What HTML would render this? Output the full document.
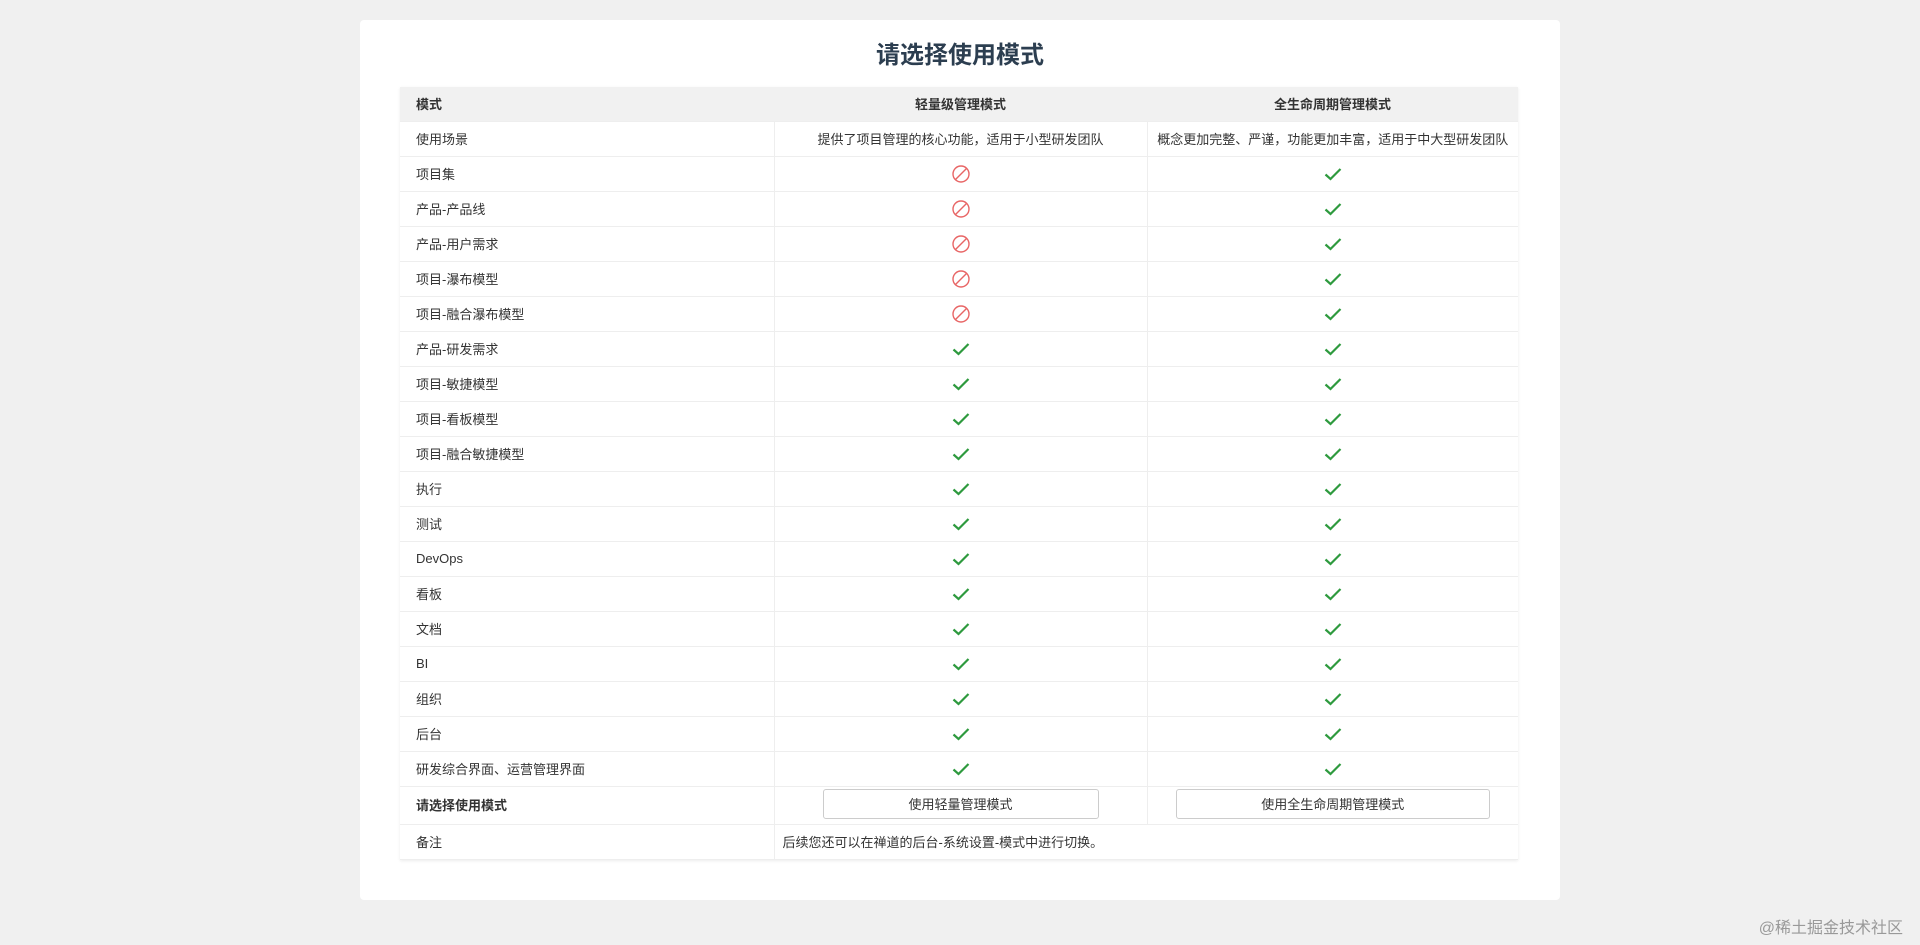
<!DOCTYPE html>
<html><head><meta charset="utf-8"><style>
body{margin:0;width:1920px;height:945px;background:#f0f0f0;font-family:"Liberation Sans","Noto Sans CJK SC",sans-serif;color:#333;position:relative;overflow:hidden}
.card{position:absolute;left:360px;top:20px;width:1200px;height:880px;background:#fff;border-radius:4px}
h1{position:absolute;left:0;right:0;top:19px;margin:0;text-align:center;font-size:24px;font-weight:bold;color:#2c3e50;line-height:34px}
table{position:absolute;left:40px;top:67px;width:1118px;border-collapse:collapse;font-size:13px;table-layout:fixed;box-shadow:0 1px 3px rgba(0,0,0,.08)}
td,th{height:35px;padding:0 16px;border-bottom:1px solid #eee;box-sizing:border-box;white-space:nowrap}
td+td{padding:0 6px}
th{background:#f1f1f1;height:34px;font-weight:bold;color:#333}
th:first-child{text-align:left}
td+td{border-left:1px solid #eee;text-align:center}
td:first-child{text-align:left}
.b td{height:38px;padding-bottom:2px}
.btn{display:inline-block;border:1px solid #ccc;border-radius:3px;height:30px;line-height:30px;font-size:13px;background:#fff;box-sizing:border-box}
svg{vertical-align:middle}
.wm{position:absolute;right:17px;top:914px;font-size:16px;color:#999}
</style></head><body>
<div class="card"><h1>请选择使用模式</h1>
<table>
<colgroup><col style="width:374px"><col style="width:373px"><col style="width:371px"></colgroup>
<thead><tr><th>模式</th><th>轻量级管理模式</th><th>全生命周期管理模式</th></tr></thead>
<tbody id="tb"></tbody>
</table></div>
<div class="wm">@稀土掘金技术社区</div>
<script>
var F='<svg width="20" height="20" viewBox="0 0 20 20"><circle cx="10" cy="10" r="8" fill="none" stroke="#e86565" stroke-width="1.4"/><line x1="4.5" y1="15.5" x2="15.5" y2="4.5" stroke="#e86565" stroke-width="1.4"/></svg>';
var C='<svg width="18" height="14" viewBox="0 0 18 14"><path d="M1.5 7.5 L6.5 12 L16.5 2" fill="none" stroke="#2e9a3e" stroke-width="2.2"/></svg>';
var rows=[["项目集",0],["产品-产品线",0],["产品-用户需求",0],["项目-瀑布模型",0],["项目-融合瀑布模型",0],["产品-研发需求",1],["项目-敏捷模型",1],["项目-看板模型",1],["项目-融合敏捷模型",1],["执行",1],["测试",1],["DevOps",1],["看板",1],["文档",1],["BI",1],["组织",1],["后台",1],["研发综合界面、运营管理界面",1]];
var h='<tr><td>使用场景</td><td>提供了项目管理的核心功能，适用于小型研发团队</td><td>概念更加完整、严谨，功能更加丰富，适用于中大型研发团队</td></tr>';
rows.forEach(function(r){h+='<tr><td>'+r[0]+'</td><td>'+(r[1]?C:F)+'</td><td>'+C+'</td></tr>'});
h+='<tr class="b"><td><b>请选择使用模式</b></td><td><span class="btn" style="width:276px">使用轻量管理模式</span></td><td><span class="btn" style="width:314px">使用全生命周期管理模式</span></td></tr>';
h+='<tr><td>备注</td><td colspan="2" style="text-align:left;padding-left:8px">后续您还可以在禅道的后台-系统设置-模式中进行切换。</td></tr>';
document.getElementById('tb').innerHTML=h;
</script>
</body></html>
